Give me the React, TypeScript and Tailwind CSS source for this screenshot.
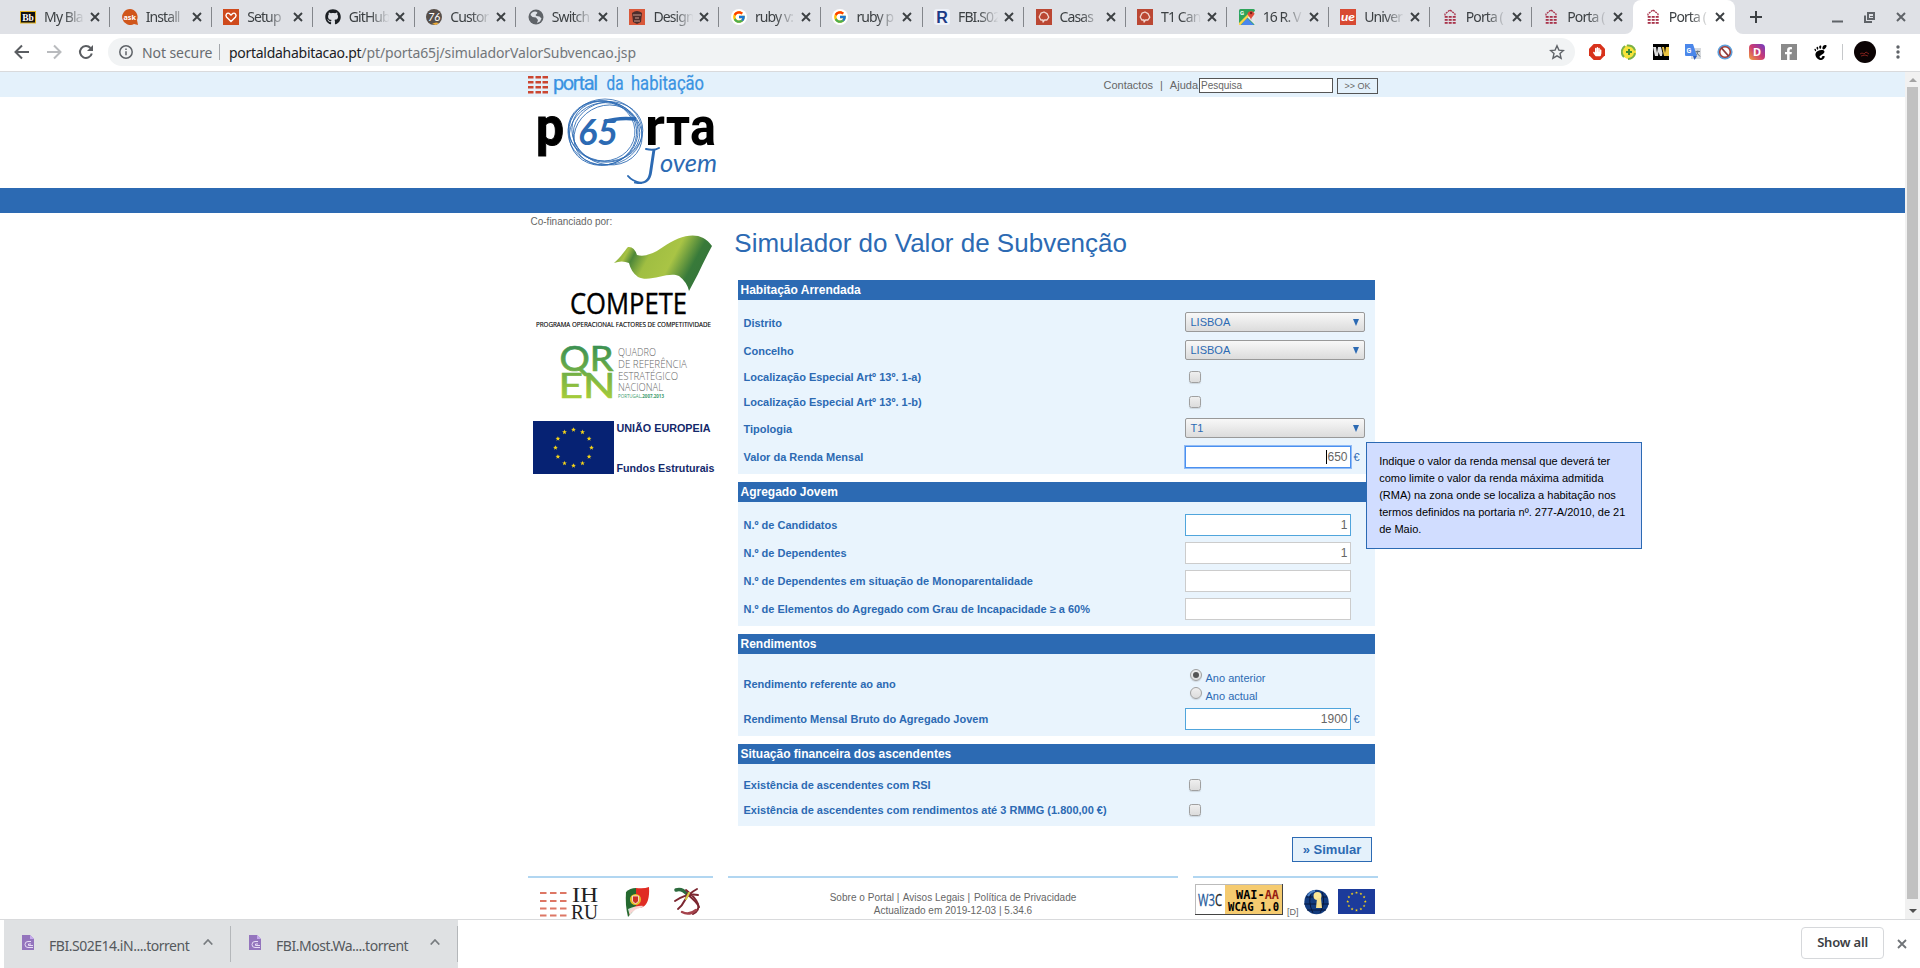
import React from "react";
import { FcGoogle } from "react-icons/fc";
import { FaGithub, FaHandPaper, FaFacebookF } from "react-icons/fa";
import { SiGnome } from "react-icons/si";

const UI = "font-['Noto_Sans',sans-serif]";

function Stars({ cx, cy, r, s }: { cx: number; cy: number; r: number; s: number }) {
  const stars: React.ReactNode[] = [];
  for (let i = 0; i < 12; i++) {
    const a = (i * Math.PI) / 6;
    const x = cx + r * Math.sin(a);
    const y = cy - r * Math.cos(a);
    const pts: string[] = [];
    for (let k = 0; k < 10; k++) {
      const rr = k % 2 ? s * 0.42 : s;
      const b = (k * Math.PI) / 5;
      pts.push(`${(x + rr * Math.sin(b)).toFixed(2)},${(y - rr * Math.cos(b)).toFixed(2)}`);
    }
    stars.push(<polygon key={i} points={pts.join(" ")} fill="#f5d418" />);
  }
  return <>{stars}</>;
}

function Close({ className = "", w = 2 }: { className?: string; w?: number }) {
  return (
    <svg className={className} width="10" height="10" viewBox="0 0 10 10" fill="none" stroke="currentColor" strokeWidth={w}>
      <path d="M1 1l8 8M9 1l-8 8" />
    </svg>
  );
}

function HouseIcon() {
  return (
    <svg width="16" height="16" viewBox="0 0 16 16">
      <path d="M3 6.500V5L8 1l5 4v1.500" fill="none" stroke="#a8324a" strokeWidth="1.300" strokeDasharray="2 .7" />
      {[7, 10, 13].map((y) =>
        [2.7, 6.7, 10.7].map((x) => <rect key={`${x}-${y}`} x={x} y={y} width="3" height="1.800" fill="#a8324a" />)
      )}
    </svg>
  );
}

function IdealistaIcon() {
  return (
    <svg width="16" height="16" viewBox="0 0 16 16">
      <rect width="16" height="16" fill="#bb4733" />
      <path d="M5.500 11H4.800L3.200 8 5 4.200 8 3l3 1.600 1.800 3.600L11 11H8.500L7 13V11z" fill="none" stroke="#f1d6cf" strokeWidth="1.300" strokeLinejoin="round" />
    </svg>
  );
}

const icons: Record<string, React.ReactNode> = {
  bb: (
    <svg width="16" height="16" viewBox="0 0 16 16">
      <rect x=".5" y="2.500" width="15" height="11.500" fill="#111" stroke="#e3b21c" />
      <text x="8" y="11.800" fontSize="9.500" fontWeight="bold" fill="#fff" textAnchor="middle" fontFamily="Liberation Serif, serif">Bb</text>
    </svg>
  ),
  ask: (
    <svg width="16" height="16" viewBox="0 0 16 16">
      <path d="M8 0a8 8 0 1 0 4 15l4 1-1-5A8 8 0 0 0 8 0z" fill="#d0561b" />
      <text x="1.500" y="10.800" fontSize="7.500" fontWeight="bold" fill="#fff" textLength="12.500" lengthAdjust="spacingAndGlyphs" fontFamily="Noto Sans, sans-serif">ask</text>
    </svg>
  ),
  setup: (
    <svg width="16" height="16" viewBox="0 0 16 16">
      <rect width="16" height="16" fill="#cf4a1c" />
      <path d="M8 12.500L3.500 8C2 6 4 3.500 6 4.300L8 6l2-1.700c2-.8 4 1.700 2.500 3.700z" fill="none" stroke="#fff" strokeWidth="1.400" />
    </svg>
  ),
  github: <FaGithub size={16} color="#1b1f23" />,
  custom: (
    <svg width="16" height="16" viewBox="0 0 16 16">
      <circle cx="8" cy="8" r="8" fill="#574f4a" />
      <path d="M6 15q3-2.500 7-1l-3 2z" fill="#efae3b" />
      <text x="8" y="12" fontSize="11" fontStyle="italic" fill="#fff" textAnchor="middle" fontFamily="Lato, sans-serif">76</text>
    </svg>
  ),
  globe: (
    <svg width="16" height="16" viewBox="0 0 16 16">
      <circle cx="8" cy="8" r="7.500" fill="#5f6368" />
      <path d="M7 2.500c2 0 3 1 2 2L7.500 6l1 1 3 .5 2 2-1.500 3-3 1.500 1-3-2-2.500-3.500-.5-2-2C3 4 5 2.500 7 2.500z" fill="#dee1e6" />
    </svg>
  ),
  design: (
    <svg width="16" height="16" viewBox="0 0 16 16">
      <rect width="16" height="16" fill="#d9583a" />
      <path d="M3 4q5-4 10 0l-1 9-4 2-4-2z" fill="#4c2d2b" />
      <path d="M4 6h8M6 9h4M5 12h6" stroke="#c99a8c" strokeWidth="1.200" />
    </svg>
  ),
  google: (
    <span className="flex size-4 items-center justify-center rounded-full bg-white">
      <FcGoogle size={14} />
    </span>
  ),
  r: (
    <svg width="16" height="16" viewBox="0 0 16 16">
      <rect width="16" height="16" rx="3" fill="#eef1f8" />
      <text x="8" y="14" fontSize="16" fontWeight="bold" fill="#1c3a86" textAnchor="middle" fontFamily="Liberation Sans, sans-serif">R</text>
    </svg>
  ),
  idealista: <IdealistaIcon />,
  maps: (
    <svg width="16" height="16" viewBox="0 0 16 16">
      <rect width="16" height="16" rx="1.500" fill="#2fa45a" />
      <path d="M8 8l8-6v14z" fill="#e4e6e8" />
      <path d="M2 16l6-7 7 7z" fill="#4a86ee" />
      <path d="M0 14L9 5l1.500 1.500L1.500 16H0z" fill="#fbd24a" />
      <path d="M8.500 4.500a3.700 3.700 0 0 1 7 0c0 2-3 3-3.400 6.500C11.500 8 8.500 6.500 8.500 4.500z" fill="#de4a3a" />
      <circle cx="12.100" cy="4" r="1.200" fill="#7c1f18" />
      <text x="1" y="6" fontSize="6" fontWeight="bold" fill="#fff" fontFamily="Roboto, sans-serif">G</text>
    </svg>
  ),
  ue: (
    <svg width="16" height="16" viewBox="0 0 16 16">
      <rect width="16" height="16" fill="#d84a33" />
      <text x="1" y="11.500" fontSize="12" fontStyle="italic" fontWeight="bold" fill="#fff" textLength="14" lengthAdjust="spacingAndGlyphs" fontFamily="Lato, sans-serif">ue</text>
    </svg>
  ),
  house: <HouseIcon />,
};

const tabs: [string, string][] = [
  ["bb", "My Bla"],
  ["ask", "Install"],
  ["setup", "Setup"],
  ["github", "GitHub"],
  ["custom", "Custor"],
  ["globe", "Switch"],
  ["design", "Design"],
  ["google", "ruby v:"],
  ["google", "ruby p"],
  ["r", "FBI.S02"],
  ["idealista", "Casas"],
  ["idealista", "T1 Can"],
  ["maps", "16 R. V"],
  ["ue", "Univer"],
  ["house", "Porta ("],
  ["house", "Porta ("],
  ["house", "Porta ("],
];

function TabStrip() {
  return (
    <div className="flex h-[34px] shrink-0 bg-[#dfe1e6] pl-[8.600px]">
      {tabs.map(([icon, label], i) => {
        const active = i === tabs.length - 1;
        return (
          <div
            key={i}
            className={`relative flex h-[34px] w-[101.560px] shrink-0 items-center pl-[11.500px] ${active ? "rounded-t-[8px] bg-white" : ""}`}
          >
            <span className="flex size-4 shrink-0 items-center justify-center">{icons[icon]}</span>
            <span className="ml-2 w-[46px] shrink-0 pb-px text-[14px] tracking-[-0.900px] whitespace-nowrap text-[#3c4043] [mask-image:linear-gradient(to_right,black_45%,transparent_88%)]">
              {label}
            </span>
            <Close className="text-[#3c4043]" w={1.9} />
            {i < tabs.length - 2 && <span className="absolute top-[7px] right-0 h-5 w-px bg-[#83868b]" />}
            {active && (
              <>
                <svg className="absolute bottom-0 -left-2" width="8" height="8"><path d="M8 0v8H0a8 8 0 0 0 8-8z" fill="#fff" /></svg>
                <svg className="absolute -right-2 bottom-0" width="8" height="8"><path d="M0 0v8h8a8 8 0 0 1-8-8z" fill="#fff" /></svg>
              </>
            )}
          </div>
        );
      })}
      <div className="ml-[14.500px] flex flex-1 items-center text-[#3c4043]">
        <svg width="14" height="14" viewBox="0 0 14 14" stroke="currentColor" strokeWidth="2"><path d="M7 1v12M1 7h12" /></svg>
        <div className="ml-auto flex items-center gap-[21px] pr-[14px] text-[#5f6368]">
          <svg width="11" height="11"><path d="M0 9.500h11" stroke="currentColor" strokeWidth="2" /></svg>
          <svg width="11" height="11" viewBox="0 0 11 11" fill="none" stroke="currentColor" strokeWidth="2">
            <path d="M4 1h6v6H4zM1 3.500V10h7" />
            <path d="M6 4.500h3" strokeWidth="1" />
          </svg>
          <Close className="text-[#5f6368]" />
        </div>
      </div>
    </div>
  );
}

function Toolbar() {
  return (
    <div className="flex h-[38px] shrink-0 items-center border-b border-[#d9dadc] bg-white pb-px pl-[14px]">
      <div className="flex w-[94px] items-center gap-4">
        <svg width="16" height="16" viewBox="0 0 16 16" fill="none" stroke="#5a5d61" strokeWidth="2"><path d="M15 8H2M8 1.500L1.500 8 8 14.500" /></svg>
        <svg width="16" height="16" viewBox="0 0 16 16" fill="none" stroke="#b9bbbe" strokeWidth="2"><path d="M1 8h13M8 1.500L14.500 8 8 14.500" /></svg>
        <svg width="16" height="16" viewBox="0 0 16 16"><path d="M13.800 9.500a6 6 0 1 1-1.300-5.500" fill="none" stroke="#5a5d61" strokeWidth="2" /><path d="M15 1v6H9z" fill="#5a5d61" /></svg>
      </div>
      <div className="flex h-7 w-[1467px] items-center rounded-full bg-[#f1f3f4] pr-[10px] pl-[11px]">
        <svg width="14" height="14" viewBox="0 0 14 14" fill="none" stroke="#5f6368" strokeWidth="1.500"><circle cx="7" cy="7" r="6.200" /><path d="M7 6.200v4M7 3.500v1.500" /></svg>
        <span className="ml-[9px] w-[71px] text-[14px] tracking-[-0.080px] whitespace-nowrap text-[#686c70]">Not secure</span>
        <span className="ml-[6px] h-4 w-px bg-[#a4a7ab]" />
        <span className="ml-[9px] text-[14px] tracking-[-0.110px] whitespace-nowrap text-[#72767a]">
          <span className="tracking-[-0.280px] text-[#202124]">portaldahabitacao.pt</span>/pt/porta65j/simuladorValorSubvencao.jsp
        </span>
        <svg className="ml-auto" width="16" height="16" viewBox="0 0 16 16" fill="none" stroke="#5f6368" strokeWidth="1.400"><path d="M8 1.800l1.900 4.300 4.600.4-3.500 3.100 1.100 4.600L8 11.800l-4.100 2.400L5 9.600 1.500 6.500l4.600-.4z" /></svg>
      </div>
      <div className="ml-[14px] flex items-center gap-4">
        <svg width="16" height="16" viewBox="0 0 16 16"><path d="M4.700 0h6.600L16 4.700v6.600L11.300 16H4.700L0 11.300V4.700z" fill="#d8321b" /><FaHandPaper x={3.500} y={3} size={9.500} color="#fff" /></svg>
        <svg width="16" height="16" viewBox="0 0 16 16"><circle cx="8" cy="8" r="7" fill="#f7e33a" /><path d="M4 2a7 7 0 0 0-1 11M6 1.500a7 7 0 0 1 8 5M14 9a7 7 0 0 1-7 6" fill="none" stroke="#7ab14a" strokeWidth="2" /><path d="M8 5v6M5 8h6" stroke="#3c8b32" strokeWidth="2" /></svg>
        <svg width="16" height="16" viewBox="0 0 16 16"><rect width="16" height="16" fill="#000" /><path d="M0 3h3l1 6 1-6h3l1.500 6L9 12H7L5.500 8 5 12H2z" fill="#dfdfdf" /><path d="M9 3h2l1 6 1-6h3v9h-5z" fill="#ecc542" /></svg>
        <svg width="16" height="16" viewBox="0 0 16 16"><rect x="6" y="4" width="10" height="11" fill="#d7dade" /><path d="M0 0h8l4 12H1a1 1 0 0 1-1-1z" fill="#4b87ea" /><path d="M8 12h4l-2.500 4z" fill="#2e5fc0" /><text x="1.500" y="8.500" fontSize="7" fontWeight="bold" fill="#fff" fontFamily="Roboto, sans-serif">G</text><path d="M10.500 7.500H15M12.800 6.500c.3 2-.8 4-1.500 4.500M11.500 8.500l3.500 4" stroke="#6b7784" strokeWidth="1" fill="none" /></svg>
        <svg width="16" height="16" viewBox="0 0 16 16"><circle cx="8" cy="8" r="7.600" fill="#5da0dc" /><circle cx="8" cy="8" r="5.300" fill="#fff" stroke="#a53c34" strokeWidth="1.600" /><path d="M4.500 4l7 8" stroke="#8b3a3a" strokeWidth="1.800" /></svg>
        <svg width="16" height="16" viewBox="0 0 16 16"><defs><linearGradient id="insta" x1="0" y1="1" x2="1" y2="0"><stop offset="0" stopColor="#f2a33c" /><stop offset=".5" stopColor="#cc3a72" /><stop offset="1" stopColor="#6d3bc4" /></linearGradient></defs><rect width="16" height="16" rx="4" fill="url(#insta)" /><text x="8" y="12" fontSize="11" fontWeight="bold" fill="#fff" textAnchor="middle" fontFamily="Noto Sans, sans-serif">D</text></svg>
        <span className="flex size-4 items-end justify-end bg-[#8a8a8a] pr-[2px] text-white"><FaFacebookF size={13} /></span>
        <SiGnome size={15} color="#000" />
      </div>
      <span className="ml-[14px] h-4 w-px bg-[#c6c8ca]" />
      <svg className="ml-[11px]" width="22" height="22"><circle cx="11" cy="11" r="11" fill="#0b0304" /><path d="M6 13l2-1 2 1 2-2 3 2M7 15l4-1 3 1" stroke="#7d201b" strokeWidth="1" fill="none" /></svg>
      <svg className="ml-[20px]" width="4" height="14" fill="#5f6368"><circle cx="2" cy="2" r="1.700" /><circle cx="2" cy="7" r="1.700" /><circle cx="2" cy="12" r="1.700" /></svg>
    </div>
  );
}

function PortalLogo() {
  return (
    <svg width="180" height="25" viewBox="0 0 180 25">
      {[4, 9, 14, 19].map((y) =>
        [0, 7.500, 14.500].map((x) => <rect key={`${x}-${y}`} x={x} y={y} width="5.500" height="2.500" fill="#cb4631" />)
      )}
      <g fontSize="20" fill="#3a93e2" stroke="#3a93e2" strokeWidth=".25" fontFamily="Roboto, sans-serif">
        <text x="25" y="18" textLength="45" lengthAdjust="spacing" transform="translate(0 0)">
          portal
        </text>
        <text x="78.500" y="18" textLength="17" lengthAdjust="spacingAndGlyphs">da</text>
        <text x="103" y="18" textLength="73" lengthAdjust="spacingAndGlyphs">habitação</text>
      </g>
    </svg>
  );
}

function PortaJovemLogo() {
  const rings = [
    [77, 35, 37, 33, 0],
    [75, 37, 34, 31, -20],
    [79, 36, 36, 31, 25],
    [76, 34, 36, 30, 12],
    [78, 38, 33, 29, -30],
    [74, 34, 33, 30, 8],
    [80, 35, 35, 30, -12],
  ];
  return (
    <svg width="190" height="91" viewBox="0 0 190 91">
      <g fill="#000" fontWeight="bold" fontSize="53" fontFamily="Roboto, sans-serif">
        <text x="8" y="48" textLength="28" lengthAdjust="spacingAndGlyphs" strokeWidth="1" stroke="#000">p</text>
        <text x="117" y="48" textLength="20" lengthAdjust="spacingAndGlyphs">r</text>
        <text x="138" y="48" textLength="24" lengthAdjust="spacingAndGlyphs">т</text>
        <text x="162" y="48" textLength="26" lengthAdjust="spacingAndGlyphs">a</text>
      </g>
      <g fill="none" stroke="#2c6ab3" strokeWidth=".8">
        {rings.map(([cx, cy, rx, ry, a], i) => (
          <ellipse key={i} cx={cx} cy={cy} rx={rx} ry={ry} transform={`rotate(${a} ${cx} ${cy})`} />
        ))}
        <path d="M76 25q14-5 32-3" strokeWidth="3.500" />
        <path d="M118 52q8 2 13-1M100 79q4 5 13 7" strokeWidth="2" strokeLinecap="round" />
      </g>
      <g fill="#2c6ab3" fontStyle="italic" fontFamily="Lato, sans-serif">
        <text x="50" y="48" fontSize="37" fontWeight="bold" textLength="40" lengthAdjust="spacingAndGlyphs">65</text>
        <text x="107" y="87" fontSize="50" fontWeight="300" textLength="23" lengthAdjust="spacingAndGlyphs">J</text>
        <text x="132" y="75" fontSize="26" textLength="57" lengthAdjust="spacingAndGlyphs">ovem</text>
      </g>
    </svg>
  );
}

function Sidebar() {
  return (
    <aside className="w-[200px] shrink-0 pt-[2px] pl-[3px]">
      <p className="-ml-[0.500px] h-[13px] text-[10px] leading-[14px] text-[#666]">Co-financiado por:</p>
      <svg width="190" height="260" viewBox="531 228 190 260">
        <defs>
          <linearGradient id="flag" x1="0" y1=".3" x2="1" y2=".6">
            <stop offset="0" stopColor="#74a43b" />
            <stop offset=".12" stopColor="#a7c143" />
            <stop offset=".2" stopColor="#4d8739" />
            <stop offset=".35" stopColor="#a0be42" />
            <stop offset=".58" stopColor="#a9c445" />
            <stop offset=".8" stopColor="#387a3a" />
            <stop offset="1" stopColor="#357339" />
          </linearGradient>
          <linearGradient id="qren" gradientUnits="userSpaceOnUse" x1="0" y1="346" x2="0" y2="398">
            <stop offset="0" stopColor="#3c9152" />
            <stop offset="1" stopColor="#a5cc3a" />
          </linearGradient>
        </defs>
        <path d="M614 263C621 257 626 249 628 247Q634 246 637 255Q648 258 663 247C682 234 701 230 712 246Q704 261 698 274L689 291Q687 282 679 276C668 271 650 283 638 277Q631 272 629 263Q622 260 614 263z" fill="url(#flag)" />
        <text x="570" y="314" fontSize="29" textLength="117" lengthAdjust="spacingAndGlyphs" fontFamily="Open Sans, sans-serif" stroke="#000" strokeWidth=".4">COMPETE</text>
        <text x="536" y="327" fontSize="7.500" stroke="#000" strokeWidth=".15" textLength="175" lengthAdjust="spacingAndGlyphs" fontFamily="Open Sans, sans-serif">PROGRAMA OPERACIONAL FACTORES DE COMPETITIVIDADE</text>
        <g fill="url(#qren)" stroke="url(#qren)" strokeWidth=".7" fontFamily="Lato, sans-serif" fontSize="34.500">
          <text x="559.500" y="371" textLength="54" lengthAdjust="spacingAndGlyphs">QR</text>
          <text x="558.500" y="398" textLength="57" lengthAdjust="spacingAndGlyphs">EN</text>
        </g>
        <g fill="#666" fontFamily="Open Sans, sans-serif" fontSize="10.500" fontWeight="300">
          <text x="618" y="356" textLength="38" lengthAdjust="spacingAndGlyphs">QUADRO</text>
          <text x="618" y="368" textLength="69" lengthAdjust="spacingAndGlyphs">DE REFERÊNCIA</text>
          <text x="618" y="379.500" textLength="60" lengthAdjust="spacingAndGlyphs">ESTRATÉGICO</text>
          <text x="618" y="391" textLength="45" lengthAdjust="spacingAndGlyphs">NACIONAL</text>
        </g>
        <text x="618" y="398" fontSize="5" fill="#3c9b6c" textLength="46" lengthAdjust="spacingAndGlyphs" fontFamily="Open Sans, sans-serif">PORTUGAL<tspan fontWeight="bold">.2007.2013</tspan></text>
        <rect x="533" y="421" width="81" height="53" fill="#062273" />
        <Stars cx={573.500} cy={447.700} r={18} s={2.500} />
        <g fill="#13296b" fontWeight="bold" fontSize="11" fontFamily="Liberation Sans, sans-serif">
          <text x="616.500" y="432" textLength="94" lengthAdjust="spacingAndGlyphs">UNIÃO EUROPEIA</text>
          <text x="616.500" y="472" textLength="98" lengthAdjust="spacingAndGlyphs">Fundos Estruturais</text>
        </g>
      </svg>
    </aside>
  );
}

function Section({ title, children }: { title: string; children: React.ReactNode }) {
  return (
    <section className="mb-2">
      <h2 className="h-5 bg-[#2c6ab3] pl-[2.500px] text-[12px] leading-5 font-bold text-white">{title}</h2>
      <div className="bg-[#e9f4fd] pt-2 pb-1">{children}</div>
    </section>
  );
}

function Row({ label, size = "h-7", children }: { label: string; size?: string; children: React.ReactNode }) {
  return (
    <div className={`flex items-center ${size}`}>
      <span className={`w-[447px] shrink-0 pl-[5.500px] text-[11px] leading-[14px] font-bold text-[#2c6ab3] ${size === "h-[25px]" ? "" : "pt-[2px]"}`}>{label}</span>
      {children}
    </div>
  );
}

function Select({ value }: { value: string }) {
  return (
    <div className="flex h-5 w-[180px] items-center justify-between rounded-[2px] border border-[#999] bg-linear-to-b from-[#f8f8f8] to-[#dcdcdc] pr-[5px] pl-[4.500px] text-[11px] leading-4 text-[#2c6ab3]">
      {value}
      <svg width="6" height="7"><path d="M0 0h6L3 7z" fill="#2c6ab3" /></svg>
    </div>
  );
}

function Check() {
  return <span className="ml-1 size-3 rounded-[2.500px] border border-[#a0a0a0] bg-linear-to-b from-[#efefef] to-[#dcdcdc] shadow-[0_1px_1px_rgba(0,0,0,0.12)]" />;
}

function Field({ value = "", variant = "plain", euro = false }: { value?: string; variant?: "plain" | "filled" | "focus"; euro?: boolean }) {
  const look = {
    plain: "border-[#ccc]",
    filled: "border-[#50a5dc]",
    focus: "border-[#4a90f0] shadow-[0_0_0_1px_#92bcf5]",
  }[variant];
  return (
    <>
      <div className={`mt-[2px] flex h-[22px] w-[166px] items-center justify-end border bg-white pr-[2.500px] text-[12px] leading-4 text-[#666] ${look}`}>
        {variant === "focus" && <span className="h-[14px] w-px bg-black" />}
        {value}
      </div>
      {euro && <span className="ml-[2.500px] pt-[2px] text-[11px] text-[#2c6ab3]">€</span>}
    </>
  );
}

function Radio({ label, on = false }: { label: string; on?: boolean }) {
  return (
    <div className="flex h-[18px] items-start pl-[5px]">
      <span className="flex size-3 items-center justify-center rounded-full border border-[#a0a0a0] bg-linear-to-b from-[#efefef] to-[#dcdcdc] shadow-[0_1px_1px_rgba(0,0,0,0.12)]">
        {on && <span className="size-[6px] rounded-full bg-[#555]" />}
      </span>
      <span className="ml-[3.500px] pt-[3px] text-[11px] leading-[13px] text-[#2c6ab3]">{label}</span>
    </div>
  );
}

function SimulatorForm() {
  return (
    <main className="w-[650px] pl-[7px]">
      <h1 className="-ml-[0.700px] h-[67px] pt-[15px] text-[26px] leading-[30px] text-[#2c6ab3]">Simulador do Valor de Subvenção</h1>
      <div className="ml-[3px] w-[637px]">
        <Section title="Habitação Arrendada">
          <Row label="Distrito"><Select value="LISBOA" /></Row>
          <Row label="Concelho"><Select value="LISBOA" /></Row>
          <Row label="Localização Especial Artº 13º. 1-a)" size="h-[25px]"><Check /></Row>
          <Row label="Localização Especial Artº 13º. 1-b)" size="h-[25px]"><Check /></Row>
          <Row label="Tipologia"><Select value="T1" /></Row>
          <Row label="Valor da Renda Mensal">
            <Field value="650" variant="focus" euro />
            <div className="relative self-start">
              <div className="absolute top-0 left-[6.500px] z-10 h-[107px] w-[276px] border border-[#2c6ab3] bg-[#d1ddff] py-[10px] pl-3 text-[11px] leading-[17px] whitespace-nowrap text-black">
                Indique o valor da renda mensal que deverá ter<br />
                como limite o valor da renda máxima admitida<br />
                (RMA) na zona onde se localiza a habitação nos<br />
                termos definidos na portaria nº. 277-A/2010, de 21<br />
                de Maio.
              </div>
            </div>
          </Row>
        </Section>
        <Section title="Agregado Jovem">
          <Row label="N.º de Candidatos"><Field value="1" variant="filled" /></Row>
          <Row label="N.º de Dependentes"><Field value="1" /></Row>
          <Row label="N.º de Dependentes em situação de Monoparentalidade"><Field /></Row>
          <Row label="N.º de Elementos do Agregado com Grau de Incapacidade ≥ a 60%"><Field /></Row>
        </Section>
        <Section title="Rendimentos">
          <Row label="Rendimento referente ao ano" size="h-[42px]">
            <div className="pt-2"><Radio label="Ano anterior" on /><Radio label="Ano actual" /></div>
          </Row>
          <Row label="Rendimento Mensal Bruto do Agregado Jovem"><Field value="1900" variant="filled" euro /></Row>
        </Section>
        <Section title="Situação financeira dos ascendentes">
          <Row label="Existência de ascendentes com RSI" size="h-[25px]"><Check /></Row>
          <Row label="Existência de ascendentes com rendimentos até 3 RMMG (1.800,00 €)" size="h-[25px]"><Check /></Row>
        </Section>
      </div>
      <div className="flex justify-end pt-[3px] pr-[6px]">
        <button className="h-[25px] w-[80px] border border-[#2c6ab3] bg-[#e4f1fb] text-[13px] leading-[22px] font-bold text-[#2c6ab3]">» Simular</button>
      </div>
    </main>
  );
}

function Footer() {
  return (
    <footer className="mt-[14px] flex justify-between text-[10px] text-[#666]">
      <div className="h-[50px] w-[185px] border-t-2 border-[#b1d6f1]">
        <svg width="185" height="44" viewBox="528 878 185 44">
          {[892, 900, 907.500, 914.500].map((y) => [540, 550, 560].map((x) => <rect key={`${x}-${y}`} x={x} y={y} width="6.500" height="2" fill="#dd7765" />))}
          <g fontFamily="Liberation Serif, serif" fontSize="20" fill="#222">
            <text x="572" y="902" textLength="26" lengthAdjust="spacingAndGlyphs">IH</text>
            <text x="571" y="919" textLength="27" lengthAdjust="spacingAndGlyphs">RU</text>
          </g>
          <path d="M626 892q4-4 10-4v20l-8 9q-3-12-2-25z" fill="#25692f" />
          <path d="M636 888q8 1 13-1 1 16-6 20-8 1-14 8 0-6 7-9z" fill="#e02c23" />
          <path d="M628 909q10-4 16-3l-8 4q-5 2-6 6z" fill="#fff" opacity=".8" />
          <circle cx="635.500" cy="899.500" r="5.500" fill="#e7bd2a" />
          <path d="M632.500 896h6v5q-3 5-6 0z" fill="#cc3027" stroke="#fff" strokeWidth=".7" />
          <g fill="none" strokeLinecap="round">
            <path d="M676 890q6-2 11 4" stroke="#2d6b3e" strokeWidth="3.500" />
            <path d="M687 894q10 8 12 13" stroke="#7c2731" strokeWidth="2" />
            <path d="M697 889q-9 5-12 11t-7 9M686 890q10 8 12 14t-5 10M675 901q12-8 23-6" stroke="#7c2731" strokeWidth="2" />
            <path d="M682 912q7 4 14-2" stroke="#a5434c" strokeWidth="2.500" />
            <path d="M689 893l-3 6" stroke="#d9d044" strokeWidth="2" />
          </g>
        </svg>
      </div>
      <div className="h-[50px] w-[450px] border-t-2 border-[#b1d6f1] pt-[13px] text-center leading-[13px]">
        <p className="tracking-[0.030px]">
          Sobre o Portal <span className="mr-px">|</span> Avisos Legais <span className="mr-px">|</span> Política de Privacidade
        </p>
        <p>Actualizado em 2019-12-03 | 5.34.6</p>
      </div>
      <div className="flex h-[50px] w-[185px] items-start border-t-2 border-[#b1d6f1] pt-[6px] pl-[2px]">
        <svg width="88" height="31">
          <rect width="88" height="31" fill="#444" />
          <rect width="87" height="30" fill="#bbb" />
          <rect x="1" y="1" width="29" height="29" fill="#fff" />
          <rect x="30" y="1" width="57" height="29" fill="#f5cb70" />
          <text x="3" y="21.500" fontSize="17" fill="#1f5c9c" stroke="#1f5c9c" strokeWidth=".3" textLength="24" lengthAdjust="spacingAndGlyphs" fontFamily="Open Sans, sans-serif">W3<tspan fill="#222" stroke="#222">C</tspan></text>
          <g fontFamily="DejaVu Sans Mono, monospace" fontWeight="bold" fontSize="12">
            <text x="41" y="14.500" textLength="43" lengthAdjust="spacingAndGlyphs">WAI-<tspan fill="#961c12">AA</tspan></text>
            <text x="33" y="26.500" textLength="51" lengthAdjust="spacingAndGlyphs">WCAG 1.0</text>
          </g>
        </svg>
        <span className="mt-[21px] ml-1 w-[12px] text-[9px] leading-[14px]">[D]</span>
        <svg className="mt-[5px] ml-[5px]" width="25" height="26" viewBox="0 0 25 26">
          <circle cx="12.500" cy="13" r="12.200" fill="#123b7e" />
          <path d="M2 8h21M0 15h25M3 21h19M8 2q-5 10 1 22M18 3q4 10-2 21" stroke="#06183f" fill="none" />
          <path d="M4 7q3-5 7-5" stroke="#4f83c6" fill="none" strokeWidth="2" />
          <circle cx="13.500" cy="7" r="4" fill="#fbe796" />
          <path d="M13 9h4l1 10h-6z" fill="#f6df8d" />
        </svg>
        <svg className="mt-1 ml-[9px]" width="37" height="26" viewBox="0 0 37 26">
          <rect y="1" width="37" height="25" fill="#1c3b9b" />
          <Stars cx={18.500} cy={13.500} r={8.800} s={1.500} />
        </svg>
      </div>
    </footer>
  );
}

function Downloads() {
  const item = (name: string, w: string) => (
    <div className={`flex h-12 items-center bg-[#dfe1e3] pl-[18px] ${w}`}>
      <svg className="-mt-1 shrink-0" width="12" height="15"><path d="M0 0h8l4 4v11H0z" fill="#9475bd" /><path d="M8 0l4 4H8z" fill="#c6a9ee" /><path d="M9 6.500H6a3 3 0 0 0 0 6h5M9 9H6.500v1.500H11" stroke="#e8ddf5" fill="none" /></svg>
      <span className="mt-[2px] ml-[15px] text-[14px] tracking-[-0.480px] whitespace-nowrap text-[#55595d]">{name}</span>
      <svg className="-mt-1 mr-[18px] ml-auto shrink-0" width="10" height="6" fill="none" stroke="#777b7f" strokeWidth="1.700"><path d="M.7 5.500L5 1l4.300 4.500" /></svg>
    </div>
  );
  return (
    <div className="flex h-[49px] shrink-0 items-start border-t border-[#d9dadc] bg-white pl-1">
      <div className="flex">
        {item("FBI.S02E14.iN....torrent", "w-[227px]")}
        <span className="mt-[6px] -ml-px h-9 w-px bg-[#b4b7ba]" />
        {item("FBI.Most.Wa....torrent", "w-[227px]")}
        <span className="mt-[6px] -ml-px h-9 w-px bg-[#b4b7ba]" />
      </div>
      <button className="mt-[7px] ml-auto h-8 w-[83px] rounded-[4px] border border-[#d6d8db] text-[13px] font-semibold tracking-[-0.200px] text-[#3c4043]">Show all</button>
      <Close className="mt-[19px] mr-[13px] ml-[13px] text-[#6f7377]" w={1.8} />
    </div>
  );
}

export default function App() {
  return (
    <div className={`flex h-[968px] w-[1920px] flex-col overflow-hidden bg-white ${UI}`}>
      <TabStrip />
      <Toolbar />
      <div className="flex h-[847px] shrink-0 overflow-hidden">
        <div className="w-[1905px] font-['Liberation_Sans',Arial,sans-serif]">
          <div className="h-[25px] bg-[#e4f1fb]">
            <div className="ml-[528px] flex w-[850px]">
              <PortalLogo />
              <div className="ml-auto flex items-start pt-[5px] text-[11px] leading-4 text-[#666]">
                <span>Contactos</span>
                <span className="mx-[7px]">|</span>
                <span>Ajuda</span>
                <span className="mt-px ml-px h-[15px] w-[134px] border border-[#555] bg-white pl-px text-[10px] leading-[13px]">Pesquisa</span>
                <span className="mt-px ml-1 h-4 w-[41px] border border-[#555] text-center text-[9px] leading-[14px]">&gt;&gt; OK</span>
              </div>
            </div>
          </div>
          <div className="ml-[528px] h-[91px]"><PortaJovemLogo /></div>
          <div className="h-[25px] bg-[#2c6ab3]" />
          <div className="ml-[528px] w-[850px]">
            <div className="flex h-[649px]">
              <Sidebar />
              <SimulatorForm />
            </div>
            <Footer />
          </div>
        </div>
        <div className="flex w-[15px] flex-col items-center bg-[#f1f1f1]">
          <svg className="mt-[6px]" width="8" height="4"><path d="M0 4h8L4 0z" fill="#a3a3a3" /></svg>
          <div className="mt-[5px] h-[812px] w-[11px] bg-[#c1c1c1]" />
          <svg className="mt-[10px]" width="8" height="4"><path d="M0 0h8L4 4z" fill="#505050" /></svg>
        </div>
      </div>
      <Downloads />
    </div>
  );
}
